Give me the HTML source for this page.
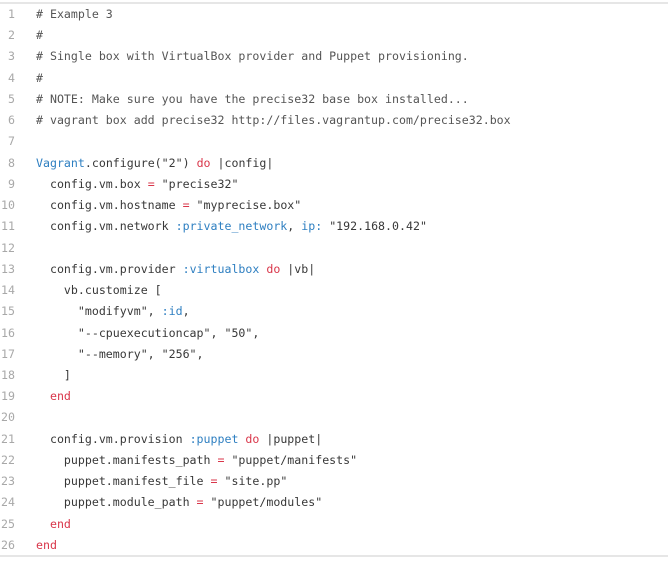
<!DOCTYPE html>
<html><head><meta charset="utf-8"><style>
html,body{margin:0;padding:0;background:#fff;width:668px;height:563px;overflow:hidden}
.box{position:absolute;left:0;top:2px;width:668px;height:551px;border-top:2px solid #e6e6e6;border-bottom:2px solid #e6e6e6}
.ln{position:absolute;left:0;top:0px;width:15px;text-align:right;color:#a8a8a8}
.code{position:absolute;left:36px;top:0px;color:#383838}
pre{margin:0;font-family:"DejaVu Sans Mono",monospace;font-size:11.6px;line-height:21.24px;white-space:pre}
.k{color:#d9364a}.b{color:#2e7fc1}.c{color:#555}
</style></head><body>
<div class="box">
<pre class="ln">1
2
3
4
5
6
7
8
9
10
11
12
13
14
15
16
17
18
19
20
21
22
23
24
25
26</pre>
<pre class="code"><span class="c"># Example 3
#
# Single box with VirtualBox provider and Puppet provisioning.
#
# NOTE: Make sure you have the precise32 base box installed...
# vagrant box add precise32 http://files.vagrantup.com/precise32.box</span>

<span class="b">Vagrant</span>.configure("2") <span class="k">do</span> |config|
  config.vm.box <span class="k">=</span> "precise32"
  config.vm.hostname <span class="k">=</span> "myprecise.box"
  config.vm.network <span class="b">:private_network</span>, <span class="b">ip:</span> "192.168.0.42"

  config.vm.provider <span class="b">:virtualbox</span> <span class="k">do</span> |vb|
    vb.customize [
      "modifyvm", <span class="b">:id</span>,
      "--cpuexecutioncap", "50",
      "--memory", "256",
    ]
  <span class="k">end</span>

  config.vm.provision <span class="b">:puppet</span> <span class="k">do</span> |puppet|
    puppet.manifests_path <span class="k">=</span> "puppet/manifests"
    puppet.manifest_file <span class="k">=</span> "site.pp"
    puppet.module_path <span class="k">=</span> "puppet/modules"
  <span class="k">end</span>
<span class="k">end</span></pre>
</div>
</body></html>
